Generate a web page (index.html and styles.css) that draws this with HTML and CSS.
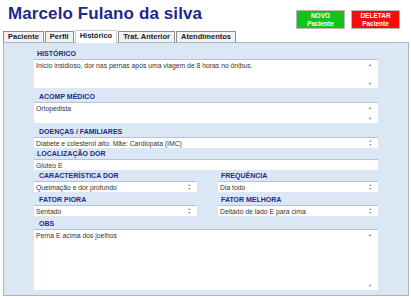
FILE: index.html
```html
<!DOCTYPE html>
<html>
<head>
  <title>Histórico do Paciente</title>
  <link rel="stylesheet" href="styles.css">
</head>
<body>
  <div class="topo">
    <h1 class="nome">Marcelo Fulano da silva</h1>
    <div class="botoes">
      <button type="button" class="btn btn-novo">NOVO<br>Paciente</button>
      <button type="button" class="btn btn-deletar">DELETAR<br>Paciente</button>
    </div>
  </div>

  <!-- abas -->
  <div class="abas">
    <span class="aba">Paciente</span>
    <span class="aba">Perfil</span>
    <span class="aba ativa">Histórico</span>
    <span class="aba">Trat. Anterior</span>
    <span class="aba">Atendimentos</span>
  </div>

  <div class="painel">
    <div class="form">
      <div class="campo">
        <label class="rotulo">HISTÓRICO</label>
        <div class="caixa area h29">Início insidioso, dor nas pernas após uma viagem de 8 horas no ônibus.<span class="rolagem"><i>▲</i><i>▼</i></span></div>
      </div>

      <div class="campo">
        <label class="rotulo recuo">ACOMP MÉDICO</label>
        <div class="caixa area h21">Ortopedista<span class="rolagem"><i>▲</i><i>▼</i></span></div>
      </div>

      <div class="campo">
        <label class="rotulo recuo">DOENÇAS / FAMILIARES</label>
        <div class="caixa linha">Diabete e colesterol alto. Mãe: Cardiopata (IMC)<span class="giro"><i>▲</i><i>▼</i></span></div>
      </div>

      <div class="campo">
        <label class="rotulo">LOCALIZAÇÃO DOR</label>
        <div class="caixa linha">Glúteo E</div>
      </div>

      <div class="duas">
        <div class="campo">
          <label class="rotulo recuo">CARACTERÍSTICA DOR</label>
          <div class="caixa linha">Queimação e dor profundo<span class="giro"><i>▲</i><i>▼</i></span></div>
        </div>
        <div class="campo">
          <label class="rotulo">FREQUÊNCIA</label>
          <div class="caixa linha">Dia todo<span class="giro"><i>▲</i><i>▼</i></span></div>
        </div>
      </div>

      <div class="duas">
        <div class="campo">
          <label class="rotulo recuo">FATOR PIORA</label>
          <div class="caixa linha">Sentado<span class="giro"><i>▲</i><i>▼</i></span></div>
        </div>
        <div class="campo">
          <label class="rotulo">FATOR MELHORA</label>
          <div class="caixa linha">Deitado de lado E para cima<span class="giro"><i>▲</i><i>▼</i></span></div>
        </div>
      </div>

      <div class="campo">
        <label class="rotulo recuo">OBS</label>
        <div class="caixa area h61">Perna E acima dos joelhos<span class="rolagem"><i>▲</i><i>▼</i></span></div>
      </div>
    </div>
  </div>
</body>
</html>
```

FILE: styles.css
```css
body {
  margin: 0;
  width: 411px;
  height: 298px;
  background-color: #ffffff;
  font-family: "Liberation Sans", Arial, sans-serif;
  overflow: hidden;
}

.topo {
  display: flex;
  justify-content: space-between;
  height: 31px;
}

.nome {
  margin: 4px 0 0 8px;
  font-size: 17px;
  font-weight: bold;
  color: #1d2a8a;
  letter-spacing: 0.1px;
}

.botoes {
  display: flex;
  gap: 6px;
  margin: 10px 11px 0 0;
}

.btn {
  width: 49px;
  height: 19px;
  border: 1px solid #b8b8b8;
  padding: 0;
  color: white;
  font-family: "Liberation Sans", Arial, sans-serif;
  font-size: 6.5px;
  font-weight: bold;
  line-height: 7.5px;
  text-align: center;
}

.btn-novo {
  background-color: #12c41a;
}

.btn-deletar {
  background-color: #f50d0d;
}

/* abas */
.abas {
  display: flex;
  align-items: flex-end;
  height: 11px;
  margin-left: 3px;
  position: relative;
  z-index: 1;
}

.aba {
  height: 10px;
  line-height: 10px;
  padding: 0 4px;
  margin-right: 1px;
  border: 1px solid #8c8c8c;
  border-bottom: none;
  background-color: #f2f2f2;
  font-size: 7.5px;
  font-weight: bold;
  color: #202020;
}

.aba.ativa {
  height: 12px;
  line-height: 10px;
  background-color: #ffffff;
  border-color: #c8c8c8;
  margin-bottom: -1px;
}

.painel {
  margin: 0 2px 0 3px;
  height: 254px;
  border: 1px solid #a9b3c2;
  background-color: #dce7f5;
  box-sizing: border-box;
}

.form {
  width: 344px;
  margin-left: 30px;
  padding-top: 6px;
}

.campo {
  display: flex;
  flex-direction: column;
  flex: 1;
}

.rotulo {
  height: 10px;
  line-height: 10px;
  padding-left: 3px;
  font-size: 7px;
  font-weight: bold;
  color: #1c2b86;
}

.rotulo.recuo {
  padding-left: 5px;
}

.duas {
  display: flex;
  gap: 21px;
  margin-bottom: 2px;
}

.duas .campo:first-child {
  flex: 0 0 163px;
}

.caixa {
  position: relative;
  background-color: #ffffff;
  border-top: 1px solid #b9c2cf;
  font-size: 6.8px;
  color: #333333;
  padding: 2px 2px 0 2px;
  box-sizing: border-box;
}

.area {
  margin-bottom: 4px;
}

.h29 {
  height: 29px;
}

.h21 {
  height: 21px;
}

.h61 {
  height: 61px;
}

.linha {
  height: 11px;
  line-height: 8px;
  margin-bottom: 1px;
}

.rolagem {
  position: absolute;
  right: 6px;
  top: 2px;
  bottom: 2px;
  display: flex;
  flex-direction: column;
  justify-content: space-between;
  font-size: 4px;
  color: #8a8a8a;
}

.giro {
  position: absolute;
  right: 6px;
  top: 1px;
  display: flex;
  flex-direction: column;
  font-size: 3.5px;
  line-height: 4px;
  color: #8a8a8a;
}

.rolagem i, .giro i {
  font-style: normal;
}
```
